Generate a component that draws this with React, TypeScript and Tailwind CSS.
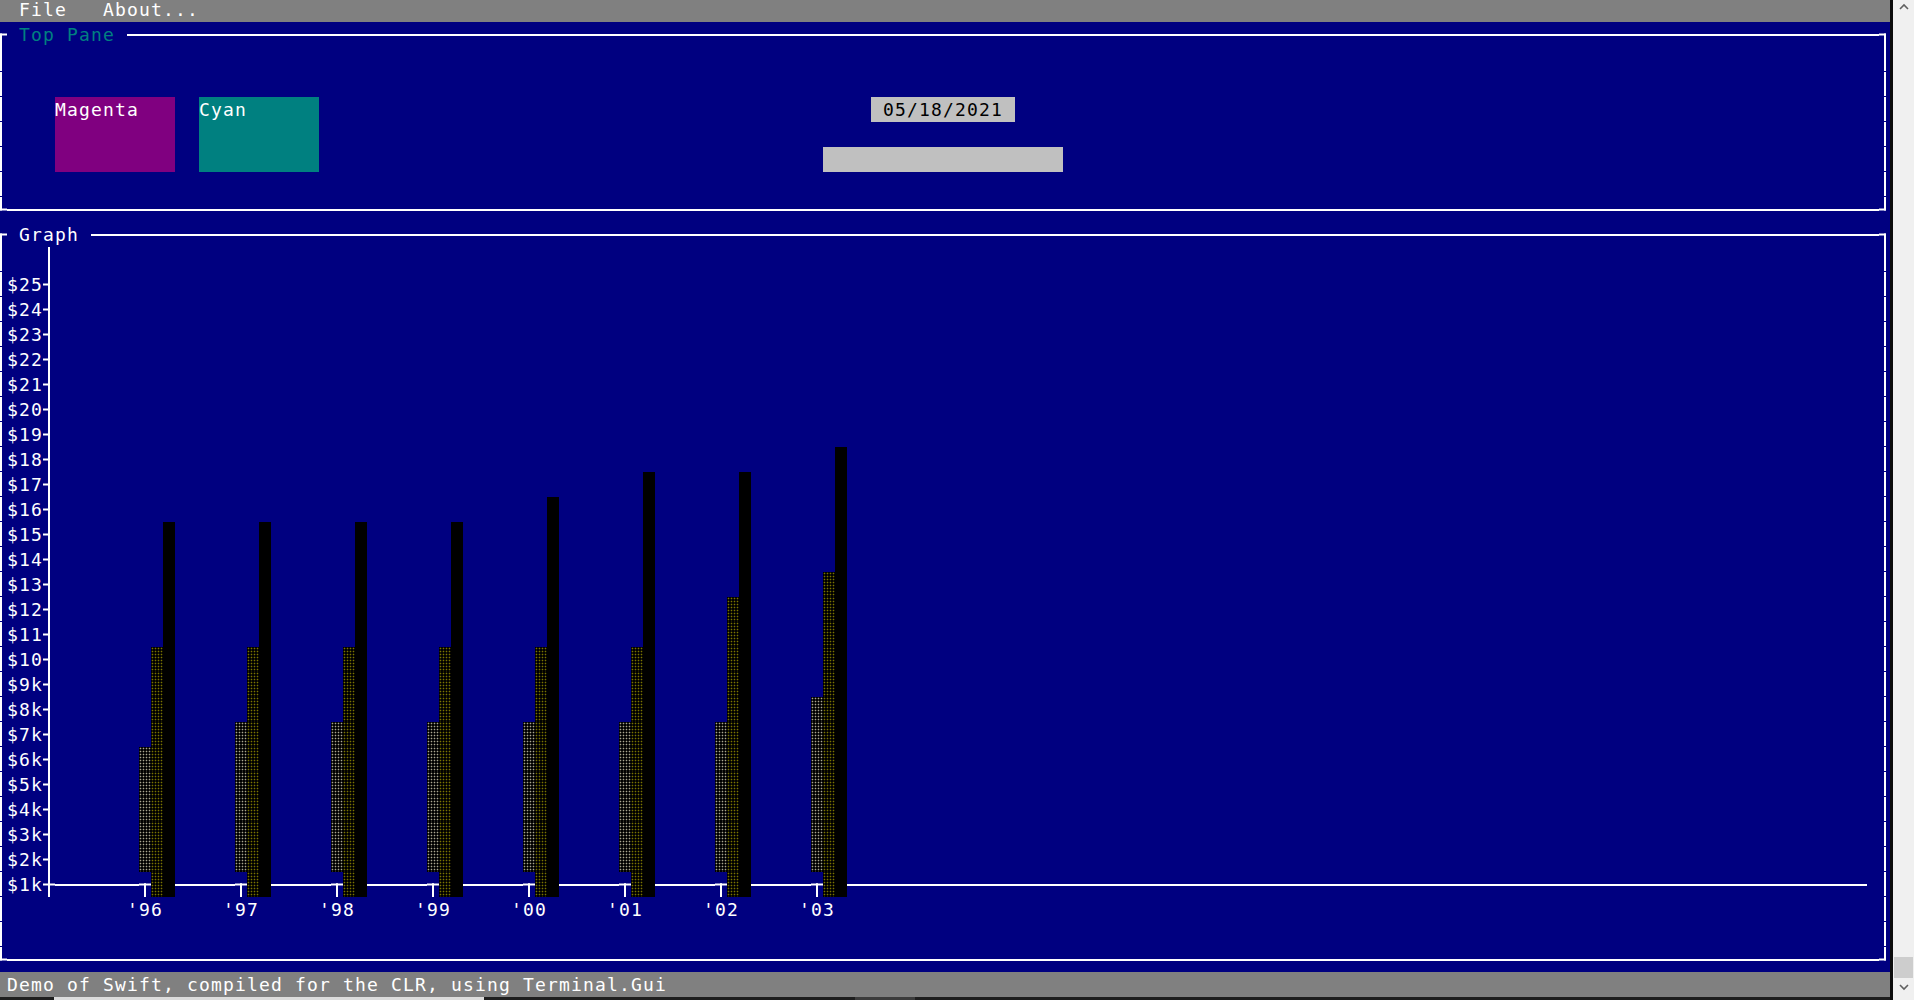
import React from "react";

// terminal cell grid: 158 cols x 40 rows, 12x25 px per cell
const COLS = 158;
const ROWS = 40;
const CW = 12;

const U = 1;
const D = 2;
const L = 4;
const R = 8;
const G = 16;

type Fg = "w" | "k" | "t";
type Bg = "blue" | "gray" | "silver" | "mag" | "cyan" | "black";
type Kind = "t" | "l" | "a" | "b";

type Cell = { ch: string; fg: Fg; bg: Bg; kind: Kind; m: number };

const FG: Record<Fg, string> = {
  w: "text-white",
  k: "text-black",
  t: "text-[#008080]",
};

const BG: Record<Bg, string> = {
  blue: "bg-[#000080]",
  gray: "bg-[#808080]",
  silver: "bg-[#c0c0c0]",
  mag: "bg-[#800080]",
  cyan: "bg-[#008080]",
  black: "bg-black",
};

const SHADE: Record<"a" | "b", string> = {
  a: "bg-black bg-[radial-gradient(circle,#aaa690_0.7px,transparent_1.1px)] bg-[length:3px_3px]",
  b: "bg-black bg-[radial-gradient(circle,#7a7400_0.7px,transparent_1.1px)] bg-[length:3px_3px]",
};

const years = ["96", "97", "98", "99", "00", "01", "02", "03"];
const aTop = [30, 29, 29, 29, 29, 29, 29, 28];
const bTop = [26, 26, 26, 26, 26, 26, 24, 23];
const cTop = [21, 21, 21, 21, 20, 19, 19, 18];

const yLabels = [
  "$25", "$24", "$23", "$22", "$21", "$20", "$19", "$18", "$17", "$16", "$15", "$14", "$13",
  "$12", "$11", "$10", "$9k", "$8k", "$7k", "$6k", "$5k", "$4k", "$3k", "$2k", "$1k",
];

function buildScreen(): Cell[][] {
  const s: Cell[][] = [];
  for (let r = 0; r < ROWS; r++) {
    const row: Cell[] = [];
    for (let c = 0; c < COLS; c++) row.push({ ch: " ", fg: "w", bg: "blue", kind: "t", m: 0 });
    s.push(row);
  }

  const put = (r: number, c: number, text: string, fg: Fg = "w", bg?: Bg) => {
    for (let i = 0; i < text.length; i++) {
      const cell = s[r][c + i];
      s[r][c + i] = { ch: text[i], fg, bg: bg ?? cell.bg, kind: "t", m: 0 };
    }
  };
  const fill = (r: number, c1: number, c2: number, bg: Bg) => {
    for (let c = c1; c <= c2; c++) s[r][c] = { ch: " ", fg: "w", bg, kind: "t", m: 0 };
  };
  const line = (r: number, c: number, m: number) => {
    s[r][c] = { ch: " ", fg: "w", bg: "blue", kind: "l", m };
  };
  const frame = (top: number, bottom: number, title: string, titleFg: Fg) => {
    const left = 0;
    const right = COLS - 1;
    line(top, left, R | D);
    for (let c = left + 1; c < right; c++) line(top, c, L | R);
    line(top, right, L | D);
    for (let r = top + 1; r < bottom; r++) {
      line(r, left, U | D | G);
      line(r, right, U | D | G);
    }
    line(bottom, left, U | R);
    for (let c = left + 1; c < right; c++) line(bottom, c, L | R);
    line(bottom, right, U | L);
    put(top, left + 1, " " + title + " ", titleFg);
  };

  // menu bar
  fill(0, 0, COLS - 1, "gray");
  put(0, 2, "File");
  put(0, 9, "About...");

  // top pane
  frame(1, 8, "Top Pane", "t");
  for (let r = 4; r <= 6; r++) {
    fill(r, 5, 14, "mag");
    fill(r, 17, 26, "cyan");
  }
  put(4, 5, "Magenta");
  put(4, 17, "Cyan");
  put(4, 73, " 05/18/2021 ", "k", "silver");
  fill(6, 69, 88, "silver");

  // graph
  frame(9, 38, "Graph", "w");
  line(10, 4, U | D);
  for (let r = 11; r <= 34; r++) line(r, 4, U | D | L);
  line(35, 4, U | D | L | R);
  for (let c = 5; c <= 155; c++) line(35, c, L | R);
  yLabels.forEach((lab, i) => put(11 + i, 1, lab));

  years.forEach((y, k) => {
    const a = 12 + 8 * k;
    line(35, a, L | R | D);
    put(36, a - 1, "'" + y);
    for (let r = aTop[k]; r <= 34; r++) s[r][a] = { ch: " ", fg: "w", bg: "black", kind: "a", m: 0 };
    for (let r = bTop[k]; r <= 35; r++) s[r][a + 1] = { ch: " ", fg: "w", bg: "black", kind: "b", m: 0 };
    for (let r = cTop[k]; r <= 35; r++) s[r][a + 2] = { ch: " ", fg: "w", bg: "black", kind: "t", m: 0 };
  });

  // status bar
  fill(39, 0, COLS - 1, "gray");
  put(39, 1, "Demo of Swift, compiled for the CLR, using Terminal.Gui");

  return s;
}

type Run = { cell: Cell; n: number; text: string };

function toRuns(row: Cell[]): Run[] {
  const runs: Run[] = [];
  for (const cell of row) {
    const last = runs[runs.length - 1];
    const blank = cell.kind === "t" && cell.ch === " ";
    const lastBlank = last && last.cell.kind === "t" && last.text.trim() === "";
    const same =
      last &&
      last.cell.kind === cell.kind &&
      last.cell.fg === cell.fg &&
      last.cell.bg === cell.bg &&
      (cell.kind !== "t" || blank === lastBlank) &&
      (cell.kind !== "l" || (cell.m === (L | R) && last.cell.m === (L | R)));
    if (same) {
      last.n += 1;
      last.text += cell.ch;
    } else {
      runs.push({ cell, n: 1, text: cell.ch });
    }
  }
  return runs;
}

function LineCell({ m }: { m: number }) {
  const gapEnd = m & G ? 24 : 25;
  let vert: React.ReactNode = null;
  if (m & U && m & D) vert = <rect x="5" y="0" width="2" height={gapEnd} />;
  else if (m & U) vert = <rect x="5" y="0" width="2" height="13.5" />;
  else if (m & D) vert = <rect x="5" y="11.5" width="2" height={gapEnd - 11.5} />;
  return (
    <svg width="12" height="25" className="block shrink-0 bg-[#000080]" fill="#ffffff">
      {vert}
      {m & L ? <rect x="0" y="11.5" width="7" height="2" /> : null}
      {m & R ? <rect x="5" y="11.5" width="7" height="2" /> : null}
    </svg>
  );
}

function TermRow({ row }: { row: Cell[] }) {
  const runs = toRuns(row);
  return (
    <div className="flex h-[25px]">
      {runs.map((run, i) => {
        const w = run.n * CW;
        const c = run.cell;
        if (c.kind === "l") {
          if (c.m === (L | R)) {
            return (
              <span key={i} className="flex h-[25px] shrink-0 items-center bg-[#000080]" style={{ width: w }}>
                <span className="h-[2px] w-full bg-white" />
              </span>
            );
          }
          return <LineCell key={i} m={c.m} />;
        }
        if (c.kind === "a" || c.kind === "b") {
          return <span key={i} className={`block h-[25px] shrink-0 ${SHADE[c.kind]}`} style={{ width: w }} />;
        }
        if (run.text.trim() === "") {
          return <span key={i} className={`block h-[25px] shrink-0 ${BG[c.bg]}`} style={{ width: w }} />;
        }
        return (
          <span
            key={i}
            className={`block h-[25px] shrink-0 whitespace-pre ${FG[c.fg]} ${BG[c.bg]}`}
            style={{ width: w }}
          >
            {run.text}
          </span>
        );
      })}
    </div>
  );
}

const Chevron = ({ up }: { up?: boolean }) => (
  <svg width="10" height="7" viewBox="0 0 10 7">
    <polyline
      points={up ? "1,6 5,2 9,6" : "1,1 5,5 9,1"}
      fill="none"
      stroke="#606060"
      strokeWidth="1.6"
    />
  </svg>
);

const screen = buildScreen();

export default function App() {
  return (
    <div className="flex h-[1000px] w-[1914px] overflow-hidden bg-[#0c0c0c]">
      <div className="flex w-[1890px] flex-col">
        <div className="h-[997px] overflow-hidden bg-[#000080]">
          <div className="-ml-[5px] -mt-[3px] flex flex-col font-['DejaVu_Sans_Mono',monospace] text-[18px] leading-[25px] tracking-[1.16px]">
            {screen.map((row, r) => (
              <TermRow key={r} row={row} />
            ))}
          </div>
        </div>
        <div className="flex h-[3px] bg-[#1e1e1e]">
          <div className="w-[54px]" />
          <div className="w-[430px] bg-[#dcdcdc]" />
          <div className="w-[371px]" />
          <div className="w-[60px] bg-[#3c3c3c]" />
        </div>
      </div>
      <div className="w-[3px] bg-[#0c0c0c]" />
      <div className="flex w-[21px] flex-col items-center bg-[#f0f0f0]">
        <div className="pt-[3px]">
          <Chevron up />
        </div>
        <div className="flex-1" />
        <div className="h-[21px] w-[19px] bg-[#cdcdcd]" />
        <div className="pt-[6px] pb-[9px]">
          <Chevron />
        </div>
      </div>
    </div>
  );
}
